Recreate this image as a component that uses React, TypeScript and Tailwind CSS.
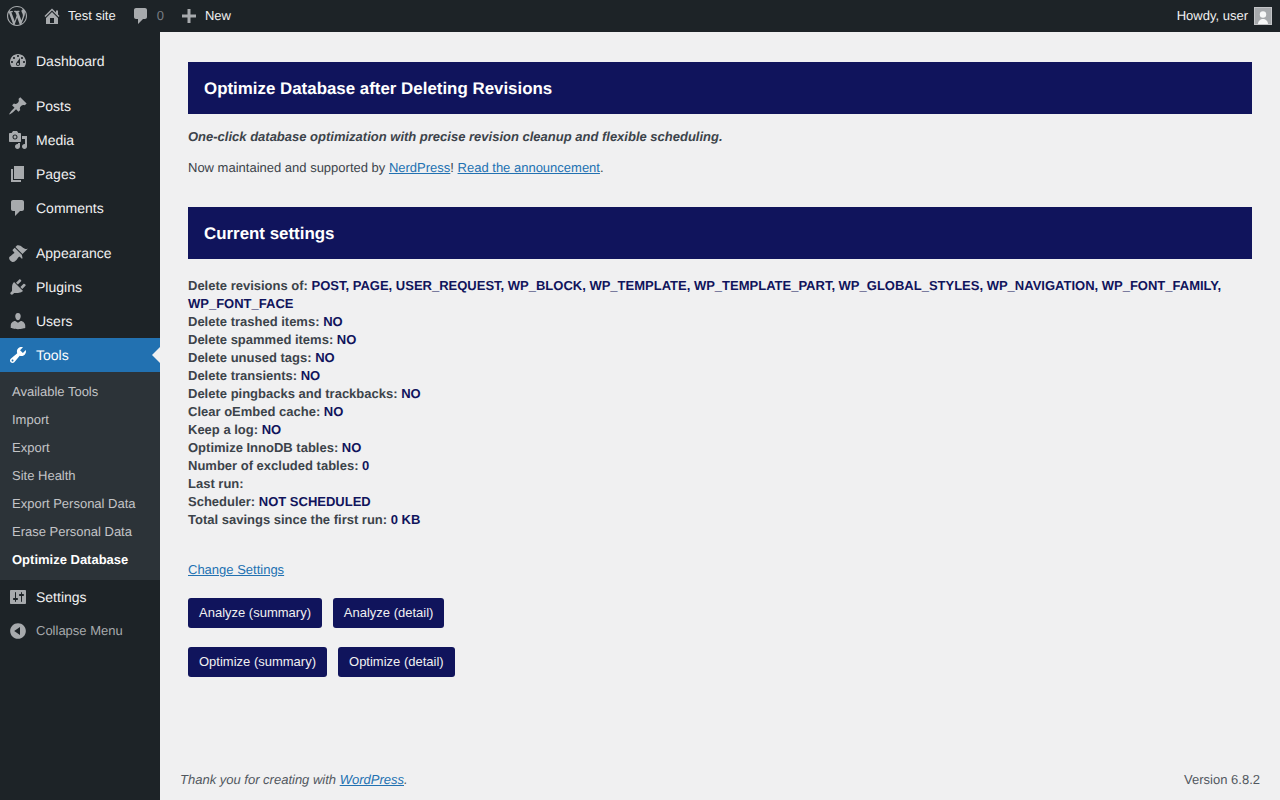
const font = { fontFamily: '"Liberation Sans", Arial, sans-serif' };

const icons = {
  wordpress:
    "M20 10c0-5.51-4.49-10-10-10C4.48 0 0 4.49 0 10c0 5.52 4.48 10 10 10 5.51 0 10-4.48 10-10zM7.78 15.37L4.37 6.22c.55-.02 1.17-.08 1.17-.08.5-.06.44-1.13-.06-1.11 0 0-1.45.11-2.37.11-.18 0-.37 0-.58-.01C4.12 2.69 6.87 1.11 10 1.11c2.33 0 4.45.87 6.05 2.34-.68-.11-1.65.39-1.65 1.58 0 .74.45 1.36.9 2.1.35.61.55 1.36.55 2.46 0 1.49-1.4 5-1.4 5l-3.03-8.37c.54-.02.82-.17.82-.17.5-.05.44-1.25-.06-1.22 0 0-1.44.12-2.38.12-.87 0-2.33-.12-2.33-.12-.5-.03-.56 1.2-.06 1.22l.92.08 1.26 3.41zM17.41 10c.24-.64.74-1.87.43-4.25.7 1.29 1.05 2.71 1.05 4.25 0 3.29-1.73 6.24-4.4 7.78.97-2.59 1.94-5.2 2.92-7.78zM6.1 18.09C3.12 16.65 1.11 13.53 1.11 10c0-1.3.23-2.48.72-3.59C3.25 10.3 4.67 14.2 6.1 18.09zm4.03-6.63l2.58 6.98c-.86.29-1.76.45-2.71.45-.79 0-1.57-.11-2.29-.33.81-2.38 1.62-4.74 2.42-7.1z",
  home: "M16 8.5l1.53 1.53-1.06 1.06L10 4.62l-6.47 6.47-1.06-1.06L10 2.5l4 4v-2h2v4zm-6-2.46l6 5.99V18H4v-5.97zM12 17v-5H8v5h4z",
  comment:
    "M5 2h9c1.1 0 2 .9 2 2v7c0 1.1-.9 2-2 2h-2l-5 5v-5H5c-1.1 0-2-.9-2-2V4c0-1.1.9-2 2-2z",
  plus: "M17 8.5v3h-5.5V17h-3v-5.5H3v-3h5.5V3h3v5.5z",
  dashboard:
    "M3.76 16h12.48c1.1-1.37 1.76-3.11 1.76-5 0-4.42-3.58-8-8-8s-8 3.58-8 8c0 1.89.66 3.63 1.76 5zM10 4c.55 0 1 .45 1 1s-.45 1-1 1-1-.45-1-1 .45-1 1-1zM6 6c.55 0 1 .45 1 1s-.45 1-1 1-1-.45-1-1 .45-1 1-1zm8 0c.55 0 1 .45 1 1s-.45 1-1 1-1-.45-1-1 .45-1 1-1zm-5.37 5.55L12 7v6c0 1.1-.9 2-2 2s-2-.9-2-2c0-.57.24-1.08.63-1.45zM4 10c.55 0 1 .45 1 1s-.45 1-1 1-1-.45-1-1 .45-1 1-1zm12 0c.55 0 1 .45 1 1s-.45 1-1 1-1-.45-1-1 .45-1 1-1zm-5 3c0-.55-.45-1-1-1s-1 .45-1 1 .45 1 1 1 1-.45 1-1z",
  pin: "M10.44 3.02l1.82-1.82 6.36 6.35-1.83 1.82c-1.05-.68-2.48-.57-3.41.36l-.75.75c-.92.93-1.04 2.35-.35 3.41l-1.83 1.82-2.41-2.41-2.8 2.79c-.42.42-3.38 2.71-3.8 2.29s1.86-3.39 2.28-3.81l2.79-2.79L4.1 9.36l1.83-1.82c1.05.69 2.48.57 3.4-.36l.75-.75c.93-.92 1.05-2.35.36-3.41z",
  media:
    "M13 11V4c0-.55-.45-1-1-1h-1.67L9 1H5L3.67 3H2c-.55 0-1 .45-1 1v7c0 .55.45 1 1 1h10c.55 0 1-.45 1-1zM7 4.5c1.38 0 2.5 1.12 2.5 2.5S8.38 9.5 7 9.5 4.5 8.38 4.5 7 5.62 4.5 7 4.5zM14 6h5v10.5c0 1.38-1.12 2.5-2.5 2.5S14 17.88 14 16.5s1.12-2.5 2.5-2.5c.17 0 .34.02.5.05V9h-3V6zm-4 8.05V13h2v3.5c0 1.38-1.12 2.5-2.5 2.5S7 17.88 7 16.5 8.12 14 9.5 14c.17 0 .34.02.5.05zM7 5.5c-.83 0-1.5.67-1.5 1.5S6.17 8.5 7 8.5 8.5 7.83 8.5 7 7.83 5.5 7 5.5z",
  pages: "M6 15V2h10v13H6zm-1 1h8v2H3V5h2v11z",
  appearance:
    "M14.48 11.06L7.41 3.99l1.5-1.5c.5-.56 2.3-.47 3.51.32 1.21.8 1.43 1.28 2.91 2.1 1.18.64 2.45 1.26 4.45.85zm-.71.71L6.7 4.7 4.93 6.47c-.39.39-.39 1.02 0 1.41l1.06 1.06c.39.39.39 1.03 0 1.42-.6.6-1.43 1.11-2.21 1.69-.35.26-.7.53-1.01.84C1.43 13.23 0 15.2 2.44 17.64c2.44 2.44 4.4 1 5.74-.34.31-.31.58-.66.84-1.01.58-.78 1.09-1.61 1.69-2.21.39-.39 1.02-.39 1.41 0l1.06 1.06c.39.39 1.02.39 1.41 0z",
  plugins:
    "M13.11 4.36L9.87 7.6 8 5.73l3.24-3.24c.35-.34 1.05-.2 1.56.32.52.51.66 1.21.31 1.55zm-8 1.77l.91-1.12 9.01 9.01-1.19.84c-.71.71-2.63 1.16-3.82 1.16H6.14L4.9 17.26c-.59.59-1.54.59-2.12 0-.59-.58-.59-1.53 0-2.12l1.24-1.24v-3.88c0-1.13.4-3.19 1.09-3.89zm7.26 3.97l3.24-3.24c.34-.35 1.04-.21 1.55.31.52.51.66 1.21.31 1.55l-3.24 3.25z",
  users:
    "M10 9.25c-2.27 0-2.73-3.44-2.73-3.44C7 4.02 7.82 2 9.97 2c2.16 0 2.98 2.02 2.71 3.81 0 0-.41 3.44-2.68 3.44zm0 2.57L12.72 10c2.39 0 4.52 2.33 4.52 4.53v2.49s-3.65 1.13-7.24 1.13c-3.65 0-7.24-1.13-7.24-1.13v-2.49c0-2.25 1.94-4.48 4.47-4.48z",
  tools:
    "M16.68 9.77c-1.34 1.34-3.3 1.67-4.95.99l-5.41 6.52c-.99.99-2.59.99-3.58 0s-.99-2.59 0-3.57l6.52-5.42c-.68-1.65-.35-3.61.99-4.95 1.28-1.28 3.12-1.62 4.72-1.06l-2.89 2.89 2.82 2.82 2.86-2.87c.53 1.58.18 3.39-1.08 4.65zM3.81 16.21c.4.39 1.04.39 1.43 0 .4-.4.4-1.04 0-1.43-.39-.4-1.03-.4-1.43 0-.39.39-.39 1.03 0 1.43z",
  settings:
    "M18 16V4c0-.55-.45-1-1-1H3c-.55 0-1 .45-1 1v12c0 .55.45 1 1 1h14c.55 0 1-.45 1-1zM8 11h1c.55 0 1 .45 1 1s-.45 1-1 1H8v1.5c0 .28-.22.5-.5.5s-.5-.22-.5-.5V13H6c-.55 0-1-.45-1-1s.45-1 1-1h1V5.5c0-.28.22-.5.5-.5s.5.22.5.5V11zm5-2h-1c-.55 0-1-.45-1-1s.45-1 1-1h1V5.5c0-.28.22-.5.5-.5s.5.22.5.5V7h1c.55 0 1 .45 1 1s-.45 1-1 1h-1v5.5c0 .28-.22.5-.5.5s-.5-.22-.5-.5V9z",
  collapse:
    "M10 2.16c4.33 0 7.84 3.51 7.84 7.84s-3.51 7.84-7.84 7.84S2.16 14.33 2.16 10 5.71 2.16 10 2.16zm2 11.72V6.12L6.18 9.97z",
};

const Icon = ({ d, size = 20, className = "" }: { d: string; size?: number; className?: string }) => (
  <svg viewBox="0 0 20 20" width={size} height={size} fill="currentColor" fillRule="evenodd" className={className}>
    <path d={d} />
  </svg>
);

const MenuItem = ({ icon, label, active }: { icon: string; label: string; active?: boolean }) => (
  <div className={`relative flex h-[34px] items-center text-[14px] ${active ? "bg-[#2271b1] text-white" : "text-[#f0f0f1]"}`}>
    <div className={`flex w-[36px] justify-center ${active ? "text-white" : "text-[#a7aaad]"}`}>
      <Icon d={icon} />
    </div>
    <span>{label}</span>
    {active && (
      <div className="absolute right-0 top-1/2 -mt-2 border-y-8 border-r-8 border-y-transparent border-r-[#f0f0f1]" />
    )}
  </div>
);

const subItems = [
  "Available Tools",
  "Import",
  "Export",
  "Site Health",
  "Export Personal Data",
  "Erase Personal Data",
];

const settings: [string, string][] = [
  ["Delete trashed items:", "NO"],
  ["Delete spammed items:", "NO"],
  ["Delete unused tags:", "NO"],
  ["Delete transients:", "NO"],
  ["Delete pingbacks and trackbacks:", "NO"],
  ["Clear oEmbed cache:", "NO"],
  ["Keep a log:", "NO"],
  ["Optimize InnoDB tables:", "NO"],
  ["Number of excluded tables:", "0"],
  ["Last run:", ""],
  ["Scheduler:", "NOT SCHEDULED"],
  ["Total savings since the first run:", "0 KB"],
];

const Banner = ({ children }: { children: string }) => (
  <h2 className="flex h-[52px] items-center bg-[#10145c] px-4 pt-[1px] text-[16.9px] font-bold text-white">{children}</h2>
);

const Btn = ({ children }: { children: string }) => (
  <button className="h-[30px] rounded-[3px] bg-[#10145c] px-[11px] text-[13px] text-[#f0f0f1]">{children}</button>
);

export default function App() {
  return (
    <div
      className="flex h-[800px] w-[1280px] flex-col overflow-hidden bg-[#f0f0f1] [text-rendering:geometricPrecision]"
      style={font}
    >
      {/* Admin bar */}
      <header className="flex h-[32px] shrink-0 items-center bg-[#1d2327] text-[13px] text-[#f0f0f1]">
        <Icon d={icons.wordpress} className="ml-[7px] text-[#a7aaad]" />
        <Icon d={icons.home} className="ml-[15px] text-[#a7aaad]" />
        <span className="ml-[6px]">Test site</span>
        <Icon d={icons.comment} className="ml-[15px] text-[#a7aaad]" />
        <span className="ml-[6px] text-[#787c82]">0</span>
        <Icon d={icons.plus} className="ml-[15px] text-[#a7aaad]" />
        <span className="ml-[6px]">New</span>
        <span className="ml-auto">Howdy, user</span>
        <div className="ml-[6px] mr-[8px] flex h-[18px] w-[18px] items-end justify-center overflow-hidden border border-[#c3c4c7] bg-[#a7aaad]">
          <svg viewBox="0 0 16 16" width="16" height="16" fill="#f6f7f7">
            <circle cx="8" cy="6.5" r="3.2" />
            <path d="M3 16c0-3 2.5-5 5-5s5 2 5 5z" />
          </svg>
        </div>
      </header>

      <div className="flex min-h-0 flex-1">
        {/* Sidebar */}
        <nav className="w-[160px] shrink-0 bg-[#1d2327] pt-3">
          <MenuItem icon={icons.dashboard} label="Dashboard" />
          <div className="mt-[11px]">
            <MenuItem icon={icons.pin} label="Posts" />
            <MenuItem icon={icons.media} label="Media" />
            <MenuItem icon={icons.pages} label="Pages" />
            <MenuItem icon={icons.comment} label="Comments" />
          </div>
          <div className="mt-[11px]">
            <MenuItem icon={icons.appearance} label="Appearance" />
            <MenuItem icon={icons.plugins} label="Plugins" />
            <MenuItem icon={icons.users} label="Users" />
            <MenuItem icon={icons.tools} label="Tools" active />
          </div>
          <div className="bg-[#2c3338] py-[6px] pl-3 text-[13px] text-[#c3c4c7]">
            {subItems.map((s) => (
              <div key={s} className="flex h-[28px] items-center">
                {s}
              </div>
            ))}
            <div className="flex h-[28px] items-center font-bold text-white">Optimize Database</div>
          </div>
          <MenuItem icon={icons.settings} label="Settings" />
          <div className="flex h-[34px] items-center text-[13px] text-[#a7aaad]">
            <div className="flex w-[36px] justify-center">
              <Icon d={icons.collapse} />
            </div>
            <span>Collapse Menu</span>
          </div>
        </nav>

        {/* Main */}
        <main className="flex min-w-0 flex-1 flex-col text-[13px] text-[#3c434a]">
          <div className="px-7 pt-[30px]">
            <Banner>Optimize Database after Deleting Revisions</Banner>
            <p className="mt-[13px] font-bold italic leading-[20px]">
              One-click database optimization with precise revision cleanup and flexible scheduling.
            </p>
            <p className="mt-[11px] leading-[20px]">
              Now maintained and supported by <a className="text-[#2271b1] underline">NerdPress</a>!{" "}
              <a className="text-[#2271b1] underline">Read the announcement</a>.
            </p>
            <div className="mt-[29px]">
              <Banner>Current settings</Banner>
            </div>
            <div className="mt-[18px] font-bold leading-[18px]">
              <div>
                Delete revisions of:{" "}
                <span className="text-[#10145c]">
                  POST, PAGE, USER_REQUEST, WP_BLOCK, WP_TEMPLATE, WP_TEMPLATE_PART, WP_GLOBAL_STYLES, WP_NAVIGATION,
                  WP_FONT_FAMILY, WP_FONT_FACE
                </span>
              </div>
              {settings.map(([k, v]) => (
                <div key={k}>
                  {k} <span className="text-[#10145c]">{v}</span>
                </div>
              ))}
            </div>
            <a className="mt-[31px] block leading-[20px] text-[#2271b1] underline">Change Settings</a>
            <div className="mt-[18px] flex gap-[10.8px]">
              <Btn>Analyze (summary)</Btn>
              <Btn>Analyze (detail)</Btn>
            </div>
            <div className="mt-[19px] flex gap-[11px]">
              <Btn>Optimize (summary)</Btn>
              <Btn>Optimize (detail)</Btn>
            </div>
          </div>
          <footer className="mt-auto flex h-[30px] items-start justify-between px-5 leading-[20px] text-[#50575e]">
            <span className="italic">
              Thank you for creating with <a className="text-[#2271b1] underline">WordPress</a>.
            </span>
            <span>Version 6.8.2</span>
          </footer>
        </main>
      </div>
    </div>
  );
}
